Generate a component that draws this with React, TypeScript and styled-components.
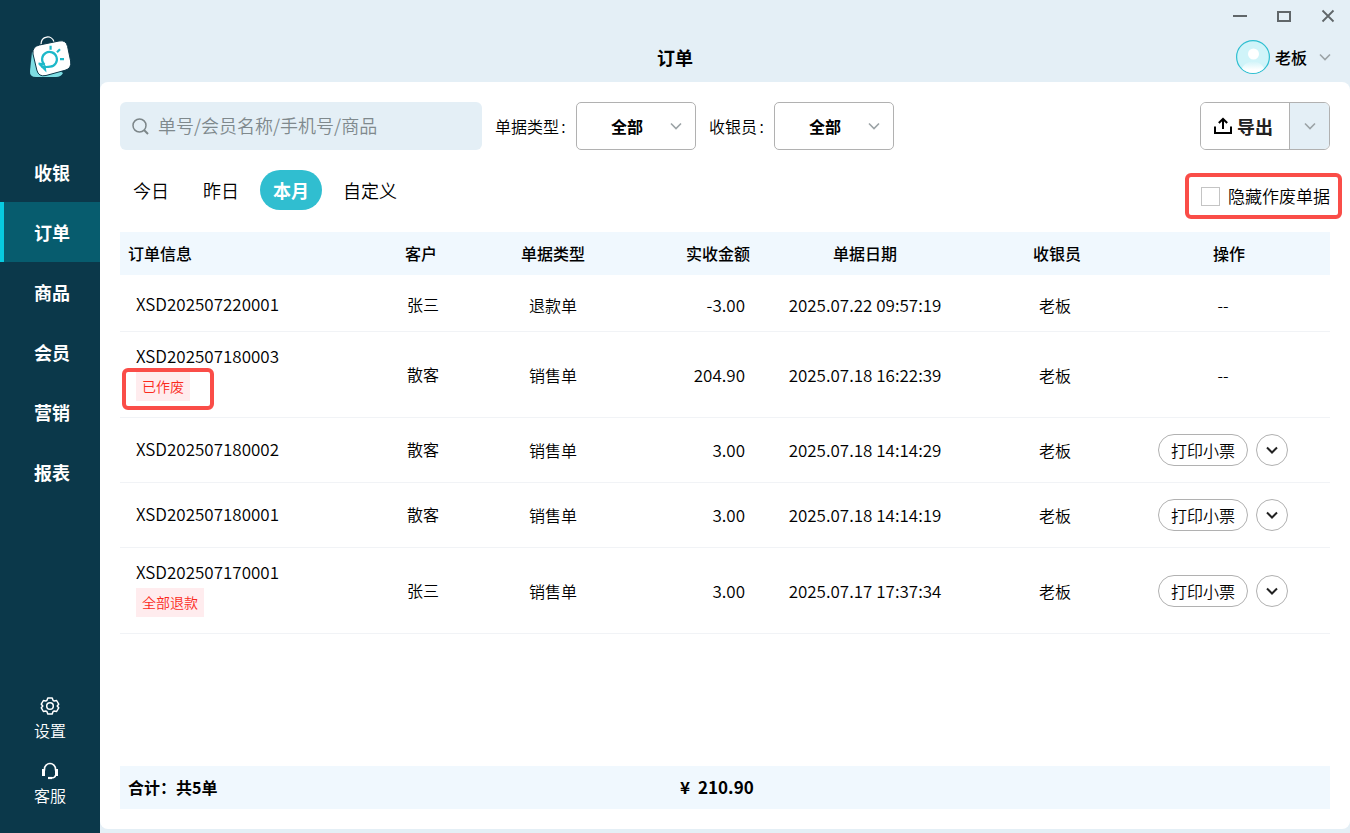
import React from "react";
import styled, { createGlobalStyle } from "styled-components";

const GlobalStyle = createGlobalStyle`
  *, *::before, *::after { box-sizing: border-box; }
  body { margin: 0; background: #e4eff6; color: #000; }
  body, button, input, select {
    font-family: "Noto Sans CJK SC", "Noto Sans", sans-serif;
    font-size: 16px;
    font-weight: 350;
  }
  button, select { color: inherit; cursor: pointer; }
`;

const Shell = styled.div`
  display: flex;
  min-height: 100vh;
`;

const Sidebar = styled.aside`
  display: flex;
  flex-direction: column;
  flex: 0 0 100px;
  background: #0b384a;
  color: #fff;
`;

const Brand = styled.div`
  display: flex;
  justify-content: center;
  padding-top: 32px;
  height: 142px;
`;

const NavLink = styled.a<{ $active?: boolean }>`
  display: flex;
  align-items: center;
  height: 60px;
  padding-left: 34px;
  background: ${(p) =>
    p.$active ? "linear-gradient(90deg, #07cbe0 4px, #075c6e 4px)" : "transparent"};
  color: #fff;
  font-size: 18px;
  font-weight: 700;
  text-decoration: none;
`;

const SideTools = styled.div`
  display: flex;
  flex-direction: column;
  gap: 19px;
  margin-top: auto;
  padding-bottom: 26px;
`;

const SideTool = styled.a`
  display: flex;
  flex-direction: column;
  align-items: center;
  gap: 2px;
  color: #fff;
  line-height: 24px;
  text-decoration: none;
`;

const Main = styled.main`
  display: flex;
  flex: 1;
  flex-direction: column;
  min-width: 0;
  padding-bottom: 4px;
`;

const WindowBar = styled.div`
  display: flex;
  justify-content: flex-end;
  gap: 28px;
  height: 32px;
  padding-right: 14px;
`;

const WindowButton = styled.button`
  display: flex;
  align-items: center;
  padding: 0;
  border: 0;
  background: none;
  color: #606669;
`;

const PageHeader = styled.header`
  display: grid;
  align-items: center;
  height: 50px;
`;

const Title = styled.h1`
  grid-area: 1 / 1;
  justify-self: center;
  margin: 0 100px 0 0;
  font-size: 18px;
  font-weight: 700;
`;

const UserButton = styled.button`
  display: flex;
  grid-area: 1 / 1;
  align-items: center;
  justify-self: end;
  gap: 5px;
  padding: 0 19px 0 0;
  border: 0;
  background: none;
  font-weight: 500;

  svg:last-child { margin-left: 7px; }
`;

const Panel = styled.section`
  display: flex;
  flex: 1;
  flex-direction: column;
  padding: 20px;
  border-radius: 8px;
  background: #fff;
`;

const Toolbar = styled.div`
  display: flex;
  align-items: center;
  gap: 13px;
`;

const SearchBox = styled.label`
  display: flex;
  align-items: center;
  gap: 9px;
  width: 362px;
  height: 48px;
  padding: 0 12px;
  border-radius: 6px;
  background: #e4eff6;
  color: #7c8689;
`;

const SearchInput = styled.input`
  flex: 1;
  min-width: 0;
  padding: 0 0 2px;
  border: 0;
  outline: 0;
  background: none;
  font-size: 18px;

  &::placeholder { color: #7f898d; opacity: 1; }
`;

const Field = styled.label`
  display: flex;
  align-items: center;
  gap: 8px;
`;

const FieldName = styled.span`
  display: flex;

  &::after { content: ":"; width: 9px; text-align: center; }
`;

const SelectFrame = styled.span`
  display: grid;
  align-items: center;
  width: 120px;
  height: 48px;

  svg {
    grid-area: 1 / 1;
    justify-self: end;
    margin-right: 14px;
    pointer-events: none;
  }
`;

const Select = styled.select`
  grid-area: 1 / 1;
  width: 100%;
  height: 48px;
  padding: 0 18px 0 0;
  border: 1px solid #b1b1b1;
  border-radius: 5px;
  appearance: none;
  background: #fff;
  font-weight: 700;
  text-align: center;
  text-align-last: center;
`;

const SplitButton = styled.div`
  display: flex;
  height: 48px;
  margin-left: auto;
  border: 1px solid #b1b1b1;
  border-radius: 6px;
  overflow: hidden;
`;

const ExportButton = styled.button`
  display: flex;
  align-items: center;
  gap: 5px;
  padding: 0 16px 0 13px;
  border: 0;
  background: #fff;
  color: #222;
  font-size: 18px;
  font-weight: 700;
`;

const ExportMenuButton = styled.button`
  display: grid;
  place-items: center;
  width: 40px;
  padding: 0;
  border: 0;
  border-left: 1px solid #b1b1b1;
  background: #e4eff6;
`;

const FilterRow = styled.div`
  display: flex;
  align-items: center;
  gap: 8px;
  margin: 20px 0 22px;
`;

const RangeTab = styled.button<{ $active?: boolean }>`
  height: 40px;
  padding: 0 13px;
  border: 0;
  border-radius: 20px;
  background: ${(p) => (p.$active ? "#30bed0" : "none")};
  color: ${(p) => (p.$active ? "#fff" : "#000")};
  font-size: 18px;
  font-weight: ${(p) => (p.$active ? 700 : 350)};
`;

const HideVoided = styled.label`
  position: relative;
  display: flex;
  align-items: center;
  gap: 8px;
  margin: 12px 0 0 auto;
  font-size: 17px;
  line-height: 28px;
`;

const Checkbox = styled.input`
  width: 19px;
  height: 19px;
  margin: 0;
  border: 1px solid #c4c4c4;
  appearance: none;
  background: #fff;

  &:checked { background: #30bed0; }
`;

const Highlight = styled.span<{ $inset: string }>`
  position: absolute;
  inset: ${(p) => p.$inset};
  border: 4px solid #fa4d48;
  border-radius: 6px;
  pointer-events: none;
`;

const Table = styled.table`
  width: 100%;
  border-spacing: 0;
  table-layout: fixed;
`;

const HeadCell = styled.th<{ $align?: string; $pad?: string }>`
  height: 43px;
  padding: ${(p) => p.$pad ?? "0 0 1px"};
  background: #f0f8fe;
  font-weight: 500;
  line-height: 24px;
  text-align: ${(p) => p.$align ?? "center"};
`;

const Row = styled.tr<{ $height: number }>`
  height: ${(p) => p.$height}px;

  &:first-child td { padding-top: 4px; }
`;

const Cell = styled.td<{ $align?: string; $pad?: string; $numeric?: boolean }>`
  padding: ${(p) => p.$pad ?? "0"};
  border-bottom: 1px solid #f1f3f6;
  font-size: ${(p) => (p.$numeric ? 17 : 16)}px;
  line-height: 26px;
  text-align: ${(p) => p.$align ?? "center"};
  white-space: nowrap;
`;

const Tag = styled.div`
  position: relative;
  width: fit-content;
  margin-top: 3px;
  padding: 0 6px;
  background: #ffecee;
  color: #fb2a1c;
  font-size: 14px;
  line-height: 29px;
`;

const Actions = styled.div`
  display: flex;
  justify-content: center;
  gap: 8px;
`;

const PrintButton = styled.button`
  height: 32px;
  padding: 0 12px;
  border: 1px solid #b1b1b1;
  border-radius: 16px;
  background: #fff;
`;

const MoreButton = styled.button`
  display: grid;
  place-items: center;
  width: 32px;
  height: 32px;
  padding: 0;
  border: 1px solid #b1b1b1;
  border-radius: 50%;
  background: #fff;
`;

const Summary = styled.footer`
  display: grid;
  grid-template-columns: 552fr 650fr;
  align-items: center;
  height: 43px;
  margin-top: auto;
  padding: 0 0 2px 8px;
  background: #f0f8fe;
  font-weight: 700;
`;

const Total = styled.span`
  display: flex;
  gap: 8px;
  font-size: 17px;
`;

function Chevron({ color = "#9ca3a6", stroke = 1.6 }) {
  return (
    <svg width="12" height="12" viewBox="0 0 12 12" fill="none" stroke={color} strokeWidth={stroke} aria-hidden="true">
      <path d="M1 3.500 6 8.500l5-5" />
    </svg>
  );
}

function Logo() {
  return (
    <svg width="44" height="48" viewBox="0 0 44 48" fill="none" aria-hidden="true">
      <path d="M4 20 2 39q-.5 6 6 6h20q5 0 7-4z" fill="#7ddde3" />
      <path d="M13 12.500c0-9 11-10 13-2.500" stroke="#fff" strokeWidth="1.300" />
      <path d="M11.500 13 31 9q7-1.400 8.600 5.500l3 14.500q1.300 7.500-5.600 9.300L18 43.500q-7.500 1.700-9.200-5.500L5 22q-1-7.500 6.500-9z" fill="#fff" stroke="#0b384a" strokeWidth="1" />
      <g stroke="#1db8c9" strokeWidth="2.200">
        <path d="M16.200 32.500a7.400 7.400 0 1 1 6 2.200q-4 .6-8.700 0" />
        <path d="m10.500 31.500 6.500 1M11.500 32l5.500 5.500-.5-4M22.600 13.800v4M32 17.200l-3 3M32 27.200h4" />
      </g>
    </svg>
  );
}

function GearIcon() {
  return (
    <svg width="20" height="20" viewBox="0 0 20 20" fill="none" stroke="#fff" strokeWidth="1.500" strokeLinejoin="round" aria-hidden="true">
      <path d="M7.800 2h4.400l.8 2.300 1.200.7 2.400-.5 2.100 3.700L17.200 10l1.500 1.800-2.100 3.700-2.400-.5-1.200.7-.8 2.300H7.800L7 15.700 5.800 15l-2.400.5-2.100-3.700L2.800 10 1.300 8.200l2.100-3.700 2.400.5L7 4.300z" />
      <circle cx="10" cy="10" r="3.300" />
    </svg>
  );
}

function HeadsetIcon() {
  return (
    <svg width="20" height="20" viewBox="0 0 20 20" fill="none" stroke="#fff" aria-hidden="true">
      <path d="M4.500 9.500V8a5.500 5.500 0 0 1 11 0v1.500M15.500 14c0 2-2 3-4.500 3" strokeWidth="1.600" />
      <path d="M3.500 8v7M16.500 8v7" strokeWidth="3" />
      <path d="M8 17h4" strokeWidth="2.200" />
    </svg>
  );
}

function SearchIcon() {
  return (
    <svg width="17" height="17" viewBox="0 0 17 17" fill="none" stroke="currentColor" strokeWidth="1.500" aria-hidden="true">
      <circle cx="7.500" cy="7.500" r="6.500" />
      <path d="m12 12 4 4" strokeWidth="2" />
    </svg>
  );
}

function UploadIcon() {
  return (
    <svg width="18" height="18" viewBox="0 0 18 18" fill="none" stroke="#000" strokeWidth="2" aria-hidden="true">
      <path d="M1 9.500V16h16V9.500M9 12V2.500M4.800 6 9 2l4.200 4" />
    </svg>
  );
}

function Avatar() {
  return (
    <svg width="34" height="34" viewBox="0 0 34 34" aria-hidden="true">
      <defs>
        <clipPath id="avatar-clip"><circle cx="17" cy="17" r="16" /></clipPath>
        <linearGradient id="avatar-body" x1="0" y1="0" x2="0" y2="1">
          <stop offset="0" stopColor="#d2f4f9" />
          <stop offset=".5" stopColor="#fff" />
        </linearGradient>
      </defs>
      <circle cx="17" cy="17" r="16.400" fill="#d0f4f9" stroke="#2fbfd1" strokeWidth="1.200" />
      <circle cx="17.500" cy="14" r="5.500" fill="#fff" />
      <ellipse cx="17" cy="30" rx="11" ry="8.500" fill="url(#avatar-body)" clipPath="url(#avatar-clip)" />
    </svg>
  );
}

const navItems = ["收银", "订单", "商品", "会员", "营销", "报表"];
const ranges = ["今日", "昨日", "本月", "自定义"];
const columnWidths = [250, 104, 158, 126, 214, 168, 190];

interface Order {
  id: string;
  customer: string;
  type: string;
  amount: string;
  date: string;
  height: number;
  tag?: string;
  marked?: boolean;
  printable?: boolean;
}

const orders: Order[] = [
  { id: "XSD202507220001", customer: "张三", type: "退款单", amount: "-3.00", date: "2025.07.22 09:57:19", height: 57 },
  { id: "XSD202507180003", customer: "散客", type: "销售单", amount: "204.90", date: "2025.07.18 16:22:39", height: 86, tag: "已作废", marked: true },
  { id: "XSD202507180002", customer: "散客", type: "销售单", amount: "3.00", date: "2025.07.18 14:14:29", height: 65, printable: true },
  { id: "XSD202507180001", customer: "散客", type: "销售单", amount: "3.00", date: "2025.07.18 14:14:19", height: 65, printable: true },
  { id: "XSD202507170001", customer: "张三", type: "销售单", amount: "3.00", date: "2025.07.17 17:37:34", height: 86, tag: "全部退款", printable: true },
];

function FilterSelect({ label }: { label: string }) {
  return (
    <Field>
      <FieldName>{label}</FieldName>
      <SelectFrame>
        <Select defaultValue="全部">
          <option>全部</option>
        </Select>
        <Chevron />
      </SelectFrame>
    </Field>
  );
}

function OrderRow({ order }: { order: Order }) {
  return (
    <Row $height={order.height}>
      <Cell $align="left" $numeric $pad={order.tag ? "11px 0 16px 16px" : "0 0 2px 16px"}>
        {order.id}
        {order.tag && (
          <Tag>
            {order.tag}
            {order.marked && <Highlight $inset="-4px -24px -9px -14px" />}
          </Tag>
        )}
      </Cell>
      <Cell $pad="0 0 2px 2px">{order.customer}</Cell>
      <Cell>{order.type}</Cell>
      <Cell $align="right" $numeric $pad="0 13px 0 0">{order.amount}</Cell>
      <Cell $numeric>{order.date}</Cell>
      <Cell $pad="0 2px 0 0">老板</Cell>
      <Cell $pad="0 24px 0 0">
        {order.printable ? (
          <Actions>
            <PrintButton>打印小票</PrintButton>
            <MoreButton aria-label="更多">
              <Chevron color="#222" stroke={2} />
            </MoreButton>
          </Actions>
        ) : (
          "--"
        )}
      </Cell>
    </Row>
  );
}

export default function App() {
  return (
    <>
      <GlobalStyle />
      <Shell>
        <Sidebar>
          <Brand><Logo /></Brand>
          <nav>
            {navItems.map((item) => (
              <NavLink key={item} href="#" $active={item === "订单"}>{item}</NavLink>
            ))}
          </nav>
          <SideTools>
            <SideTool href="#"><GearIcon />设置</SideTool>
            <SideTool href="#"><HeadsetIcon />客服</SideTool>
          </SideTools>
        </Sidebar>
        <Main>
          <WindowBar>
            <WindowButton aria-label="最小化">
              <svg width="16" height="16" stroke="currentColor" strokeWidth="2"><path d="M1 8h14" /></svg>
            </WindowButton>
            <WindowButton aria-label="最大化">
              <svg width="16" height="16" fill="none" stroke="currentColor" strokeWidth="2"><path d="M2 4h12v9H2z" /></svg>
            </WindowButton>
            <WindowButton aria-label="关闭">
              <svg width="16" height="16" stroke="currentColor" strokeWidth="1.800"><path d="m2.500 2.500 11 11M13.500 2.500l-11 11" /></svg>
            </WindowButton>
          </WindowBar>
          <PageHeader>
            <Title>订单</Title>
            <UserButton><Avatar />老板<Chevron /></UserButton>
          </PageHeader>
          <Panel>
            <Toolbar>
              <SearchBox>
                <SearchIcon />
                <SearchInput type="text" aria-label="搜索" placeholder="单号/会员名称/手机号/商品" />
              </SearchBox>
              <FilterSelect label="单据类型" />
              <FilterSelect label="收银员" />
              <SplitButton>
                <ExportButton><UploadIcon />导出</ExportButton>
                <ExportMenuButton aria-label="导出选项"><Chevron /></ExportMenuButton>
              </SplitButton>
            </Toolbar>
            <FilterRow>
              {ranges.map((range) => (
                <RangeTab key={range} $active={range === "本月"}>{range}</RangeTab>
              ))}
              <HideVoided>
                <Checkbox type="checkbox" />
                隐藏作废单据
                <Highlight $inset="-9px -12px -9px -16px" />
              </HideVoided>
            </FilterRow>
            <Table>
              <colgroup>
                {columnWidths.map((width, i) => <col key={i} width={width} />)}
              </colgroup>
              <thead>
                <tr>
                  <HeadCell $align="left" $pad="0 0 1px 8px">订单信息</HeadCell>
                  <HeadCell $pad="0 2px 1px 0">客户</HeadCell>
                  <HeadCell>单据类型</HeadCell>
                  <HeadCell $align="right" $pad="0 8px 1px 0">实收金额</HeadCell>
                  <HeadCell>单据日期</HeadCell>
                  <HeadCell $pad="0 0 1px 2px">收银员</HeadCell>
                  <HeadCell $pad="0 12px 1px 0">操作</HeadCell>
                </tr>
              </thead>
              <tbody>
                {orders.map((order) => <OrderRow key={order.id} order={order} />)}
              </tbody>
            </Table>
            <Summary>
              <span>合计：共5单</span>
              <Total><span>¥</span><span>210.90</span></Total>
            </Summary>
          </Panel>
        </Main>
      </Shell>
    </>
  );
}
